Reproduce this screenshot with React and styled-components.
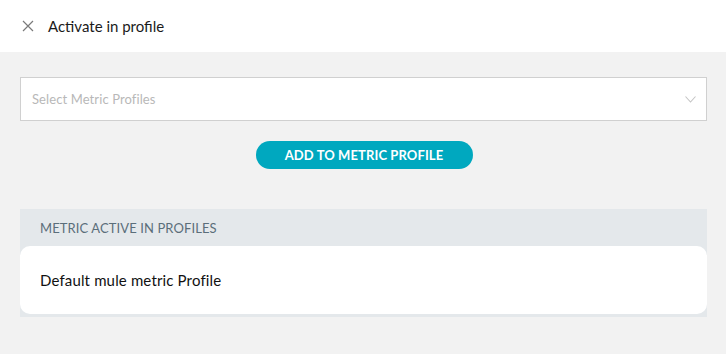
import React, { useState } from "react";
import styled, { createGlobalStyle } from "styled-components";

const GlobalStyle = createGlobalStyle`
  html, body {
    margin: 0;
    padding: 0;
    background: #f2f2f2;
    font-family: Lato, "Open Sans", sans-serif;
  }
`;

const StyledPage = styled.div`
  width: 726px;
  height: 354px;
  background: #f2f2f2;
  overflow: hidden;
`;

const StyledHeader = styled.header`
  height: 52px;
  background: #ffffff;
  display: flex;
  align-items: center;
  padding: 0 0 0 22px;
  box-sizing: border-box;
  gap: 14px;
`;

const StyledCloseButton = styled.button`
  border: none;
  background: none;
  padding: 0;
  width: 12px;
  height: 12px;
  display: flex;
  cursor: pointer;
`;

const StyledTitle = styled.h1`
  margin: 0;
  font-size: 15px;
  font-weight: 400;
  color: #1a1a1a;
`;

const StyledBody = styled.div`
  padding: 25px 19px 0 20px;
  display: flex;
  flex-direction: column;
`;

const StyledSelect = styled.div`
  height: 44px;
  box-sizing: border-box;
  background: #ffffff;
  border: 1px solid #d0d0d0;
  display: flex;
  align-items: center;
  justify-content: space-between;
  padding: 0 10px 0 11px;
  font-size: 13px;
  letter-spacing: 0.1px;
  color: #b8b8b8;
  cursor: pointer;
`;

const StyledButton = styled.button`
  align-self: center;
  margin: 20px 0 0 1px;
  width: 217px;
  height: 28px;
  border: none;
  border-radius: 14px;
  background: #00a8bf;
  color: #ffffff;
  font-family: Lato, sans-serif;
  font-size: 13px;
  font-weight: 700;
  letter-spacing: 0.1px;
  cursor: pointer;
`;

const StyledSection = styled.section`
  margin-top: 40px;
  background: #e4e8eb;
  padding-bottom: 3px;
`;

const StyledSectionTitle = styled.div`
  height: 37px;
  display: flex;
  align-items: center;
  padding-left: 20px;
  font-size: 13px;
  letter-spacing: 0.1px;
  color: #5b6e7a;
  text-transform: uppercase;
`;

const StyledCard = styled.div`
  background: #ffffff;
  border-radius: 10px;
  height: 68px;
  display: flex;
  align-items: center;
  padding-left: 20px;
  font-size: 15px;
  letter-spacing: 0.15px;
  color: #111111;
`;

function App() {
  const [profiles] = useState(["Default mule metric Profile"]);

  return (
    <StyledPage>
      <GlobalStyle />
      <StyledHeader>
        <StyledCloseButton aria-label="close">
          <svg width="12" height="12" viewBox="0 0 12 12">
            <path d="M1 1L11 11M11 1L1 11" stroke="#7a7a7a" strokeWidth="1.2" fill="none" />
          </svg>
        </StyledCloseButton>
        <StyledTitle>Activate in profile</StyledTitle>
      </StyledHeader>
      <StyledBody>
        <StyledSelect>
          <span>Select Metric Profiles</span>
          <svg width="11" height="7" viewBox="0 0 11 7">
            <path d="M0.5 0.5L5.5 6L10.5 0.5" stroke="#c4c4c4" strokeWidth="1.1" fill="none" />
          </svg>
        </StyledSelect>
        <StyledButton>ADD TO METRIC PROFILE</StyledButton>
        <StyledSection>
          <StyledSectionTitle>Metric active in profiles</StyledSectionTitle>
          {profiles.map((p) => (
            <StyledCard key={p}>{p}</StyledCard>
          ))}
        </StyledSection>
      </StyledBody>
    </StyledPage>
  );
}

export default App;
